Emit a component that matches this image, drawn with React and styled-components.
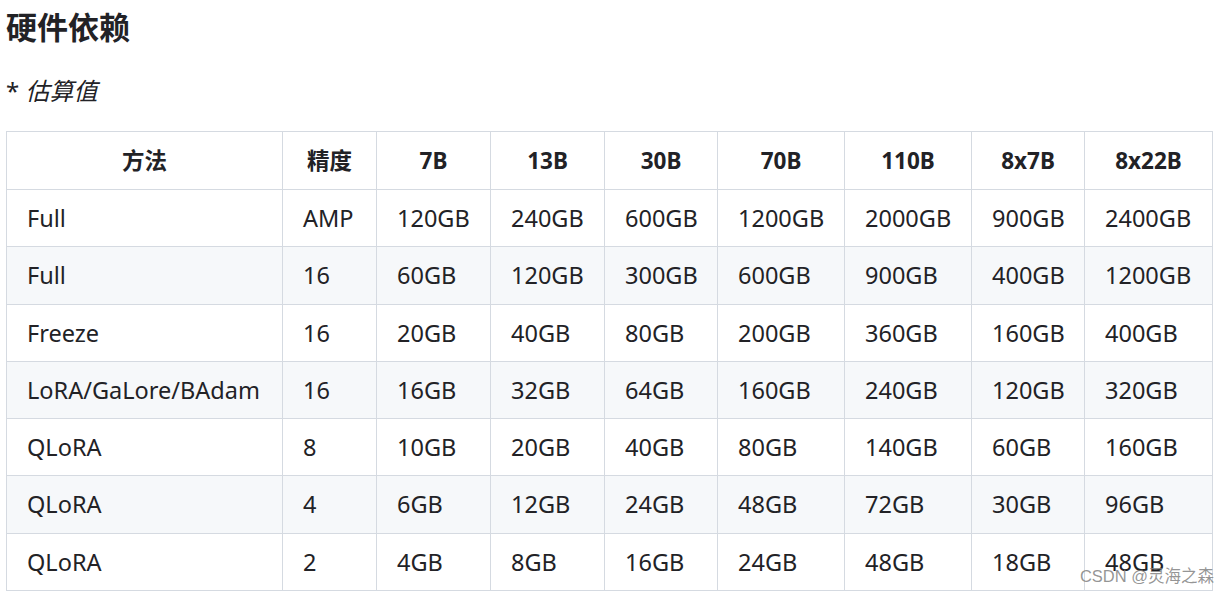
import styled, { createGlobalStyle } from 'styled-components';

const GlobalStyle = createGlobalStyle`
  body {
    margin: 0;
    background: #fff;
    color: #222226;
    font-family: "Noto Sans", "Noto Sans CJK SC", sans-serif;
  }
`;

const Page = styled.div`
  padding: 0 6px;
`;

const Heading = styled.h3`
  margin: 0;
  padding-top: 6px;
  font-size: 31px;
  line-height: 40px;
  font-weight: 700;
  font-family: "Noto Sans CJK SC", sans-serif;
  color: #222226;
`;

const Note = styled.p`
  margin: 28px 0 0;
  font-size: 24px;
  line-height: 34px;
  font-family: "Noto Sans", "Noto Sans CJK SC", sans-serif;

  em {
    font-style: italic;
  }
`;

const TableWrap = styled.div`
  position: relative;
  margin-top: 23px;
  width: 1206px;
`;

const Table = styled.table`
  border-collapse: collapse;
  table-layout: fixed;
  width: 1206px;
  font-size: 23.5px;
`;

const Row = styled.tr`
  background: ${(p) => (p.$striped ? '#f6f8fa' : '#fff')};
`;

const HeadCell = styled.th`
  border: 1px solid #d5dae1;
  padding: 10px 20px;
  line-height: 37px;
  font-size: 22.5px;
  font-weight: 700;
  text-align: center;
  white-space: nowrap;
  font-family: "Noto Sans", "Noto Sans CJK SC", sans-serif;
`;

const Cell = styled.td`
  border: 1px solid #d5dae1;
  padding: 10px 20px;
  line-height: 36.3px;
  text-align: left;
  white-space: nowrap;
`;

const Watermark = styled.div`
  position: absolute;
  right: -2px;
  bottom: 6px;
  font-size: 16.5px;
  line-height: 18px;
  color: rgba(130, 130, 130, 0.85);
  font-family: "Liberation Sans", "Noto Sans CJK SC", sans-serif;
  pointer-events: none;
`;

const widths = [276, 94, 114, 114, 113, 127, 127, 113, 128];

const headers = ['方法', '精度', '7B', '13B', '30B', '70B', '110B', '8x7B', '8x22B'];

const rows = [
  ['Full', 'AMP', '120GB', '240GB', '600GB', '1200GB', '2000GB', '900GB', '2400GB'],
  ['Full', '16', '60GB', '120GB', '300GB', '600GB', '900GB', '400GB', '1200GB'],
  ['Freeze', '16', '20GB', '40GB', '80GB', '200GB', '360GB', '160GB', '400GB'],
  ['LoRA/GaLore/BAdam', '16', '16GB', '32GB', '64GB', '160GB', '240GB', '120GB', '320GB'],
  ['QLoRA', '8', '10GB', '20GB', '40GB', '80GB', '140GB', '60GB', '160GB'],
  ['QLoRA', '4', '6GB', '12GB', '24GB', '48GB', '72GB', '30GB', '96GB'],
  ['QLoRA', '2', '4GB', '8GB', '16GB', '24GB', '48GB', '18GB', '48GB'],
];

export default function App() {
  return (
    <Page>
      <GlobalStyle />
      <Heading>硬件依赖</Heading>
      <Note>
        * <em>估算值</em>
      </Note>
      <TableWrap>
        <Table>
          <colgroup>
            {widths.map((w, i) => (
              <col key={i} style={{ width: w }} />
            ))}
          </colgroup>
          <thead>
            <Row>
              {headers.map((h) => (
                <HeadCell key={h}>{h}</HeadCell>
              ))}
            </Row>
          </thead>
          <tbody>
            {rows.map((r, i) => (
              <Row key={i} $striped={i % 2 === 1}>
                {r.map((c, j) => (
                  <Cell key={j}>{c}</Cell>
                ))}
              </Row>
            ))}
          </tbody>
        </Table>
        <Watermark>CSDN @灵海之森</Watermark>
      </TableWrap>
    </Page>
  );
}
